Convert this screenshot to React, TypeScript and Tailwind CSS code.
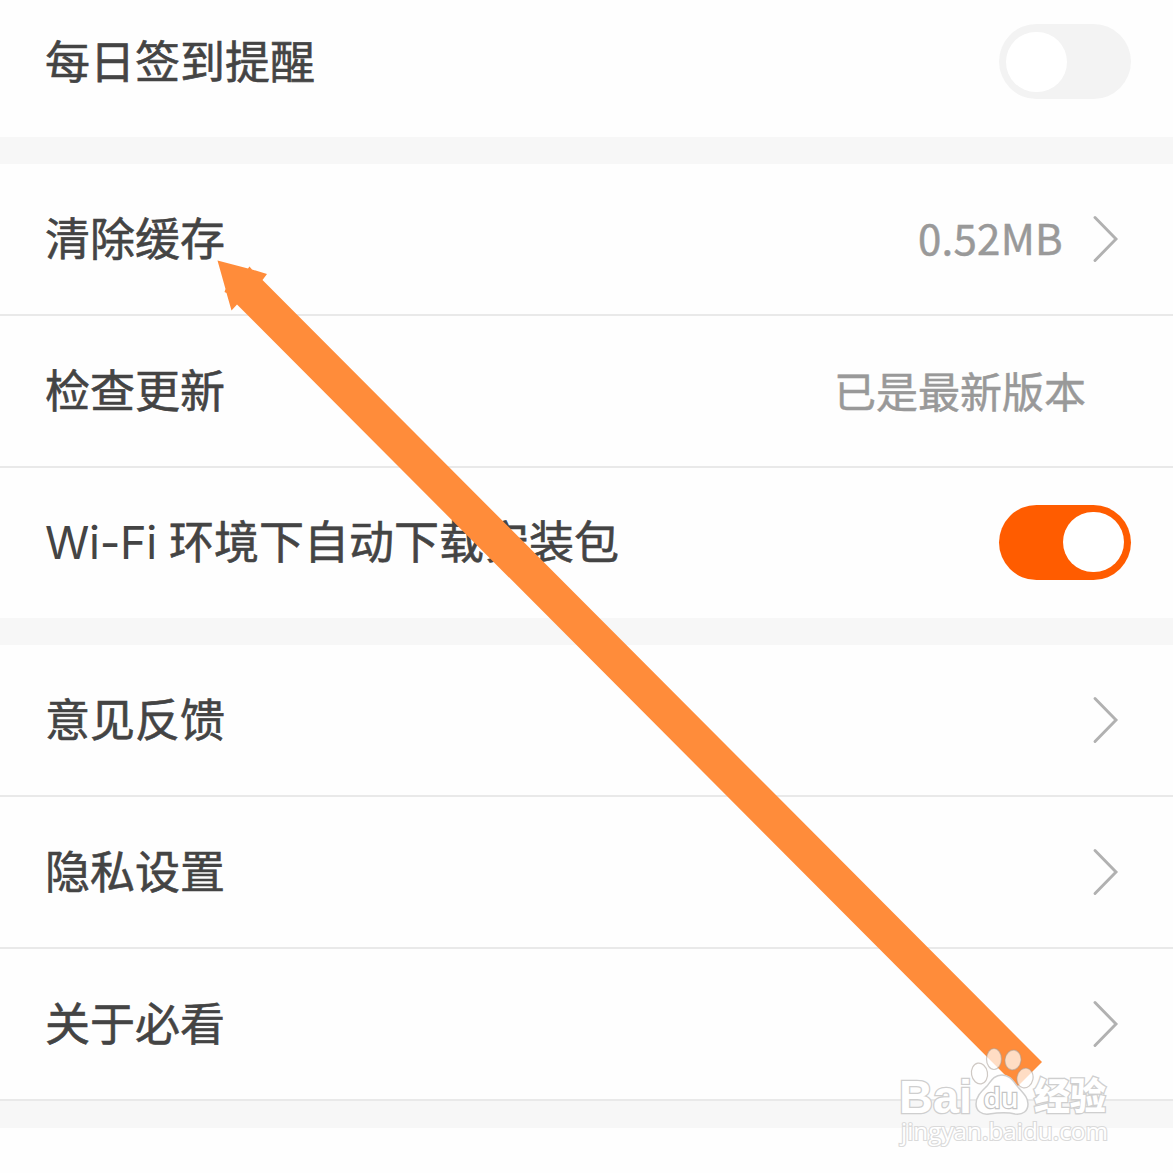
import type { ReactNode } from "react";

function Chevron() {
  return (
    <svg className="mr-[54px] h-[50px] w-[30px] shrink-0" viewBox="0 0 30 50" fill="none">
      <path d="M6 3.500 27 25 6 46.500" stroke="#b1b1b1" strokeWidth="2.9" strokeLinecap="round" />
    </svg>
  );
}

function Toggle({ on = false }: { on?: boolean }) {
  return (
    <div
      role="switch"
      aria-checked={on}
      className={
        on
          ? "relative -top-px mr-[42px] flex h-[75px] w-[132px] items-center justify-end rounded-full bg-[#ff5c00] px-[7px]"
          : "mr-[42px] flex h-[75px] w-[132px] items-center justify-start rounded-full bg-[#f3f3f3] px-[7px]"
      }
    >
      <div className="h-[60px] w-[61px] rounded-full bg-white" />
    </div>
  );
}

function Row({ label, children, last = false }: { label: ReactNode; children?: ReactNode; last?: boolean }) {
  return (
    <div className={last ? "h-[150px]" : "h-[152px] border-b-2 border-[#e9e9e9]"}>
      <div className="flex h-[150px] items-center justify-between pl-[45px]">
        <span className="mb-1 text-[45px] leading-[60px] whitespace-nowrap [-webkit-text-stroke:0.6px_#444]">{label}</span>
        <div className="flex items-center">{children}</div>
      </div>
    </div>
  );
}

function Gap() {
  return <div className="h-[27px] bg-[#f7f7f7]" />;
}

function Arrow() {
  return (
    <svg className="pointer-events-none absolute top-0 left-0 h-[1173px] w-[1173px]" viewBox="0 0 1173 1173">
      <path
        d="M217.500 260.500 248 268.500 249.500 266.500 252 269.500 267 274 262.500 280 1042 1062 1017 1087 237 304.500 231.500 310.500 226.500 293 224.500 292 225.500 289Z"
        fill="#ff8c3a"
      />
    </svg>
  );
}

function Watermark() {
  return (
    <svg
      className="pointer-events-none absolute top-[1040px] left-[890px] h-[120px] w-[230px]"
      viewBox="890 1040 230 120"
      fill="#fff"
      stroke="#cfcfcf"
    >
      <g strokeWidth="2.600" paintOrder="stroke">
        <text x="899" y="1112.500" fontSize="47" fontWeight="700" textLength="73" lengthAdjust="spacingAndGlyphs" className="font-['Liberation_Sans',sans-serif]">Bai</text>
        <text x="1034" y="1109.500" fontSize="37" fontWeight="900" textLength="72" lengthAdjust="spacingAndGlyphs" className="font-['Noto_Sans_CJK_SC',sans-serif]">经验</text>
      </g>
      <g fillOpacity="0.7" strokeWidth="1.2" stroke="#a89c94" strokeOpacity="0.55">
        <ellipse cx="979.500" cy="1073.500" rx="8" ry="10.500" transform="rotate(-10 979.500 1073.500)" />
        <ellipse cx="994" cy="1059" rx="7.500" ry="10.500" />
        <ellipse cx="1013" cy="1060" rx="8" ry="10" transform="rotate(8 1013 1060)" />
        <ellipse cx="1025" cy="1078" rx="8" ry="10" transform="rotate(12 1025 1078)" />
      </g>
      <path
        d="M1002 1075C994 1075 991 1081 987 1086C982 1091 976 1096 976 1104C976 1111 982 1115 989 1114C996 1113 1007 1112 1015 1114C1023 1115 1028 1111 1028 1104C1028 1097 1023 1093 1018 1087C1013 1081 1010 1075 1002 1075Z"
        strokeWidth="1.5"
      />
      <text x="983.500" y="1107.500" fontSize="27" fontWeight="600" strokeWidth="2.400" stroke="#c4c4c4" paintOrder="stroke" textLength="35" lengthAdjust="spacingAndGlyphs" className="font-['Open_Sans',sans-serif]">du</text>
      <text x="901" y="1139.500" fontSize="23" fontWeight="500" stroke="#dadada" strokeWidth="2.200" paintOrder="stroke" textLength="207" lengthAdjust="spacingAndGlyphs" className="font-['Open_Sans',sans-serif]">jingyan.baidu.com</text>
    </svg>
  );
}

export default function App() {
  return (
    <div className="relative h-[1173px] w-[1173px] overflow-hidden bg-[#fefefe] font-['Noto_Sans_CJK_SC',sans-serif] text-[#444]">
      <div className="flex h-[137px] items-start justify-between pl-[45px]">
        <span className="mt-[30px] text-[45px] leading-[60px] [-webkit-text-stroke:0.6px_#444]">每日签到提醒</span>
        <div className="mt-6">
          <Toggle />
        </div>
      </div>
      <Gap />
      <Row label="清除缓存">
        <span className="mr-[26px] mb-1 text-[42px] leading-[60px] tracking-[0.3px] text-[#999] [-webkit-text-stroke:0.5px_#999]">0.52MB</span>
        <Chevron />
      </Row>
      <Row label="检查更新">
        <span className="mr-[87px] mb-[3px] text-[42px] leading-[60px] text-[#999] [-webkit-text-stroke:0.5px_#999]">已是最新版本</span>
      </Row>
      <Row
        label={
          <>
            <span className="mr-[11px] inline-block w-[113px] font-['Inter',sans-serif] text-[45px] tracking-[-0.3px] [-webkit-text-stroke:0px]">Wi-Fi</span>
            环境下自动下载安装包
          </>
        }
        last
      >
        <Toggle on />
      </Row>
      <Gap />
      <Row label="意见反馈">
        <Chevron />
      </Row>
      <Row label="隐私设置">
        <Chevron />
      </Row>
      <Row label="关于必看">
        <Chevron />
      </Row>
      <Gap />
      <Arrow />
      <Watermark />
    </div>
  );
}
